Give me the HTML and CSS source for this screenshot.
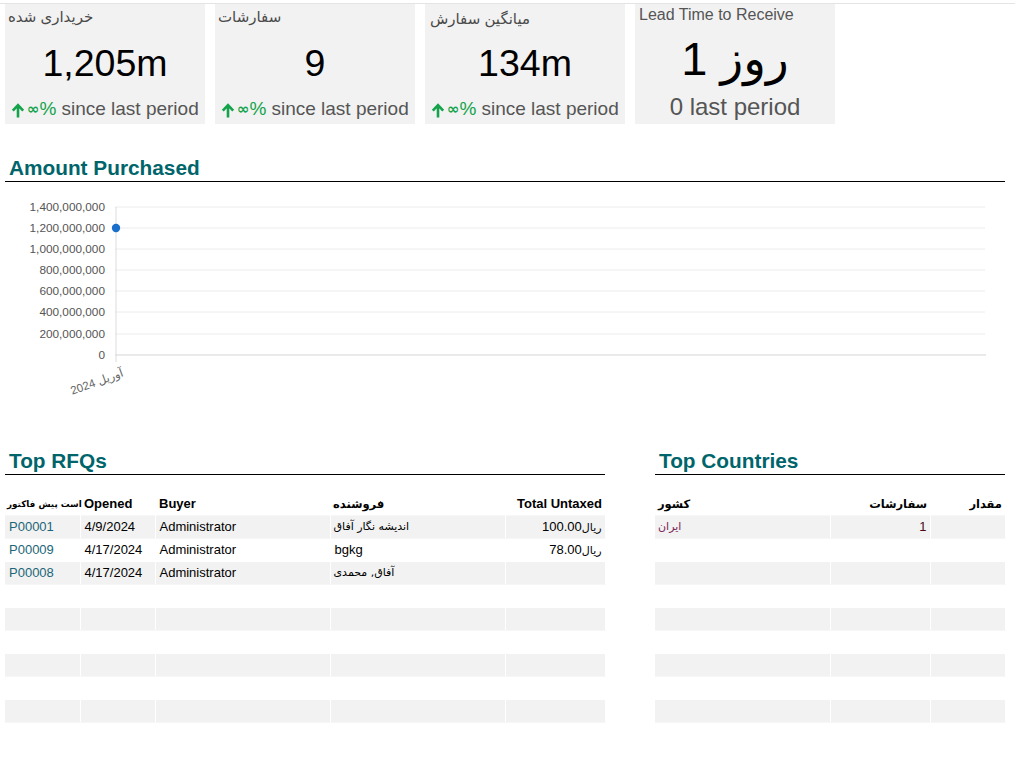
FILE: index.html
```html
<!DOCTYPE html>
<html lang="fa">
<head>
<meta charset="utf-8">
<title>Purchase Dashboard</title>
<link rel="stylesheet" href="styles.css">
</head>
<body>
<div class="page">
  <div class="cards">
    <div class="card">
      <div class="card-title">خریداری شده</div>
      <div class="card-value">1,205m</div>
      <div class="card-foot"><svg class="arrow" viewBox="0 0 14 16" width="14" height="16"><path d="M7 15.5V3.5M1.8 8.6L7 3.2L12.2 8.6" fill="none" stroke="#14a34b" stroke-width="2.6"/></svg><span class="pct"><span class="inf">∞</span>%</span> since last period</div>
    </div>
    <div class="card">
      <div class="card-title">سفارشات</div>
      <div class="card-value">9</div>
      <div class="card-foot"><svg class="arrow" viewBox="0 0 14 16" width="14" height="16"><path d="M7 15.5V3.5M1.8 8.6L7 3.2L12.2 8.6" fill="none" stroke="#14a34b" stroke-width="2.6"/></svg><span class="pct"><span class="inf">∞</span>%</span> since last period</div>
    </div>
    <div class="card">
      <div class="card-title card-title-low">میانگین سفارش</div>
      <div class="card-value">134m</div>
      <div class="card-foot"><svg class="arrow" viewBox="0 0 14 16" width="14" height="16"><path d="M7 15.5V3.5M1.8 8.6L7 3.2L12.2 8.6" fill="none" stroke="#14a34b" stroke-width="2.6"/></svg><span class="pct"><span class="inf">∞</span>%</span> since last period</div>
    </div>
    <div class="card card-lead">
      <div class="card-title lead-title">Lead Time to Receive</div>
      <div class="card-value lead-value">1 روز</div>
      <div class="card-foot lead-foot">0 last period</div>
    </div>
  </div>

  <section class="section">
    <h2 class="heading heading-first">Amount Purchased</h2>
    <svg class="chart" viewBox="0 0 1000 220" width="1000" height="220">
      <g class="grid">
        <line x1="110" y1="25" x2="980" y2="25"/>
        <line x1="110" y1="46" x2="980" y2="46"/>
        <line x1="110" y1="67" x2="980" y2="67"/>
        <line x1="110" y1="88" x2="980" y2="88"/>
        <line x1="110" y1="109" x2="980" y2="109"/>
        <line x1="110" y1="130" x2="980" y2="130"/>
        <line x1="110" y1="152" x2="980" y2="152"/>
      </g>
      <line class="axis-y" x1="111" y1="25" x2="111" y2="180"/>
      <line class="axis-x" x1="110" y1="173" x2="981" y2="173"/>
      <g class="ylabels">
        <text x="100" y="29">1,400,000,000</text>
        <text x="100" y="50">1,200,000,000</text>
        <text x="100" y="71">1,000,000,000</text>
        <text x="100" y="92">800,000,000</text>
        <text x="100" y="113">600,000,000</text>
        <text x="100" y="134">400,000,000</text>
        <text x="100" y="156">200,000,000</text>
        <text x="100" y="177">0</text>
      </g>
      <circle cx="111" cy="46" r="4.2" fill="#1a6fcb"/>
      <text class="xlabel" x="119" y="194" transform="rotate(-20 119 194)">آوریل 2024</text>
    </svg>
  </section>

  <div class="bottom">
    <section class="panel panel-rfq">
      <h2 class="heading">Top RFQs</h2>
      <table class="tbl">
        <colgroup><col class="c75"><col class="c75"><col class="c175"><col class="c175"><col class="c100"></colgroup>
        <thead>
          <tr><th class="fa clip">است پیش فاکتور</th><th>Opened</th><th>Buyer</th><th class="fa">فروشنده</th><th class="r">Total Untaxed</th></tr>
        </thead>
        <tbody>
          <tr><td class="link">P00001</td><td>4/9/2024</td><td>Administrator</td><td class="fa">اندیشه نگار آفاق</td><td class="r"><span class="fa">ریال</span>100.00</td></tr>
          <tr><td class="link">P00009</td><td>4/17/2024</td><td>Administrator</td><td>bgkg</td><td class="r"><span class="fa">ریال</span>78.00</td></tr>
          <tr><td class="link">P00008</td><td>4/17/2024</td><td>Administrator</td><td class="fa">آفاق, محمدی</td><td class="r"></td></tr>
          <tr><td></td><td></td><td></td><td></td><td></td></tr>
          <tr><td></td><td></td><td></td><td></td><td></td></tr>
          <tr><td></td><td></td><td></td><td></td><td></td></tr>
          <tr><td></td><td></td><td></td><td></td><td></td></tr>
          <tr><td></td><td></td><td></td><td></td><td></td></tr>
          <tr><td></td><td></td><td></td><td></td><td></td></tr>
        </tbody>
      </table>
    </section>
    <section class="panel panel-countries">
      <h2 class="heading">Top Countries</h2>
      <table class="tbl">
        <colgroup><col class="c175"><col class="c100"><col class="c75"></colgroup>
        <thead>
          <tr><th class="fa">کشور</th><th class="fa r">سفارشات</th><th class="fa r">مقدار</th></tr>
        </thead>
        <tbody>
          <tr><td class="fa country">ایران</td><td class="r count">1</td><td></td></tr>
          <tr><td></td><td></td><td></td></tr>
          <tr><td></td><td></td><td></td></tr>
          <tr><td></td><td></td><td></td></tr>
          <tr><td></td><td></td><td></td></tr>
          <tr><td></td><td></td><td></td></tr>
          <tr><td></td><td></td><td></td></tr>
          <tr><td></td><td></td><td></td></tr>
          <tr><td></td><td></td><td></td></tr>
        </tbody>
      </table>
    </section>
  </div>
</div>
</body>
</html>
```

FILE: styles.css
```css
* { box-sizing: border-box; }

html, body {
  margin: 0;
  padding: 0;
  background: #fff;
}

body {
  font-family: "Liberation Sans", "DejaVu Sans", Arial, sans-serif;
  color: #000;
}

.page {
  padding-top: 3px;
  width: 1015px;
}

.cards {
  border-top: 1px solid #e4e4e4;
  display: flex;
  gap: 10px;
  padding: 0 5px;
}

.card {
  width: 200px;
  height: 120px;
  background: #f2f2f2;
  display: grid;
  grid-template-rows: 22px 1fr 24px;
  padding: 2px 0 3px 3px;
}

.card-title {
  font-size: 15px;
  line-height: 22px;
  color: #4a4a4a;
  white-space: nowrap;
}

.card-title-low {
  padding-left: 2px;
  padding-top: 2px;
}

.card-value {
  font-size: 37.5px;
  line-height: 44px;
  text-align: center;
  align-self: center;
  color: #000;
  padding-right: 3px;
}

.card-foot {
  font-size: 19px;
  line-height: 24px;
  color: #555;
  white-space: nowrap;
  padding-left: 3px;
  display: flex;
  align-items: center;
}

.arrow {
  display: block;
  margin-right: 2px;
  margin-top: 1px;
}

.pct {
  color: #14a34b;
  margin-right: 5px;
}

.inf {
  font-size: 15px;
  font-family: "DejaVu Sans", sans-serif;
  font-weight: bold;
  position: relative;
  top: -1px;
}

.card-lead {
  grid-template-rows: 20px 1fr 28px;
  padding: 1px 0 3px 0;
}

.lead-title {
  font-size: 16px;
  line-height: 20px;
  color: #555;
  padding-left: 4px;
}

.lead-value {
  font-size: 47px;
  line-height: 54px;
  padding-right: 0;
}

.lead-foot {
  font-size: 24px;
  line-height: 28px;
  justify-content: center;
  padding-left: 0;
}

.section {
  padding: 0 10px 0 5px;
}

.heading {
  margin: 0;
  font-size: 20.8px;
  font-weight: bold;
  line-height: 24px;
  color: #00656b;
  padding: 0 4px 1px;
  border-bottom: 1px solid #000;
}

.heading-first {
  margin-top: 32px;
}

.chart {
  display: block;
  font-family: "Liberation Sans", "DejaVu Sans", sans-serif;
}

.grid line {
  stroke: #ececec;
  stroke-width: 1;
}

.axis-y {
  stroke: #dcdcdc;
  stroke-width: 1;
}

.axis-x {
  stroke: #d6d6d6;
  stroke-width: 1.2;
}

.ylabels text {
  font-size: 11.8px;
  fill: #555;
  text-anchor: end;
}

.xlabel {
  font-size: 11.5px;
  fill: #666;
  text-anchor: end;
}

.bottom {
  display: flex;
  gap: 50px;
  padding: 0 10px 0 5px;
  margin-top: 47px;
}

.panel-rfq { width: 600px; }
.panel-countries { width: 350px; }

.tbl {
  width: 100%;
  border-collapse: collapse;
  table-layout: fixed;
  margin-top: 18px;
  font-size: 13px;
}

.c75 { width: 75px; }
.c100 { width: 100px; }
.c175 { width: 175px; }

.tbl th {
  font-weight: bold;
  text-align: left;
  height: 22px;
  padding: 0 3px 0 4px;
  white-space: nowrap;
  overflow: hidden;
  vertical-align: middle;
}

.tbl th.fa {
  font-size: 11.5px;
  font-family: "DejaVu Sans", sans-serif;
  padding-left: 3px;
}

.tbl th.clip {
  padding: 0 0 0 2px;
  font-size: 8.8px;
  letter-spacing: -0.5px;
  overflow: visible;
}

.tbl td {
  height: 23px;
  padding: 0 3px 0 4px;
  white-space: nowrap;
  overflow: hidden;
  border-right: 1px solid #fff;
  border-top: 1px solid #f7f7f7;
  border-bottom: 1px solid #f7f7f7;
}

.tbl tbody tr:nth-child(odd) td {
  background: #f2f2f2;
}

.tbl tbody tr:nth-child(even) td {
  border-top-color: #fff;
  border-bottom-color: #fff;
}

.tbl td.fa {
  font-family: "DejaVu Sans", sans-serif;
  font-size: 11px;
  padding-left: 3px;
}

.tbl .r { text-align: right; }

.tbl td .fa {
  font-family: "DejaVu Sans", sans-serif;
  font-size: 11px;
}

.link { color: #1b6678; }

.country { color: #7c2257; }
.count { color: #4a0b12; }
```
